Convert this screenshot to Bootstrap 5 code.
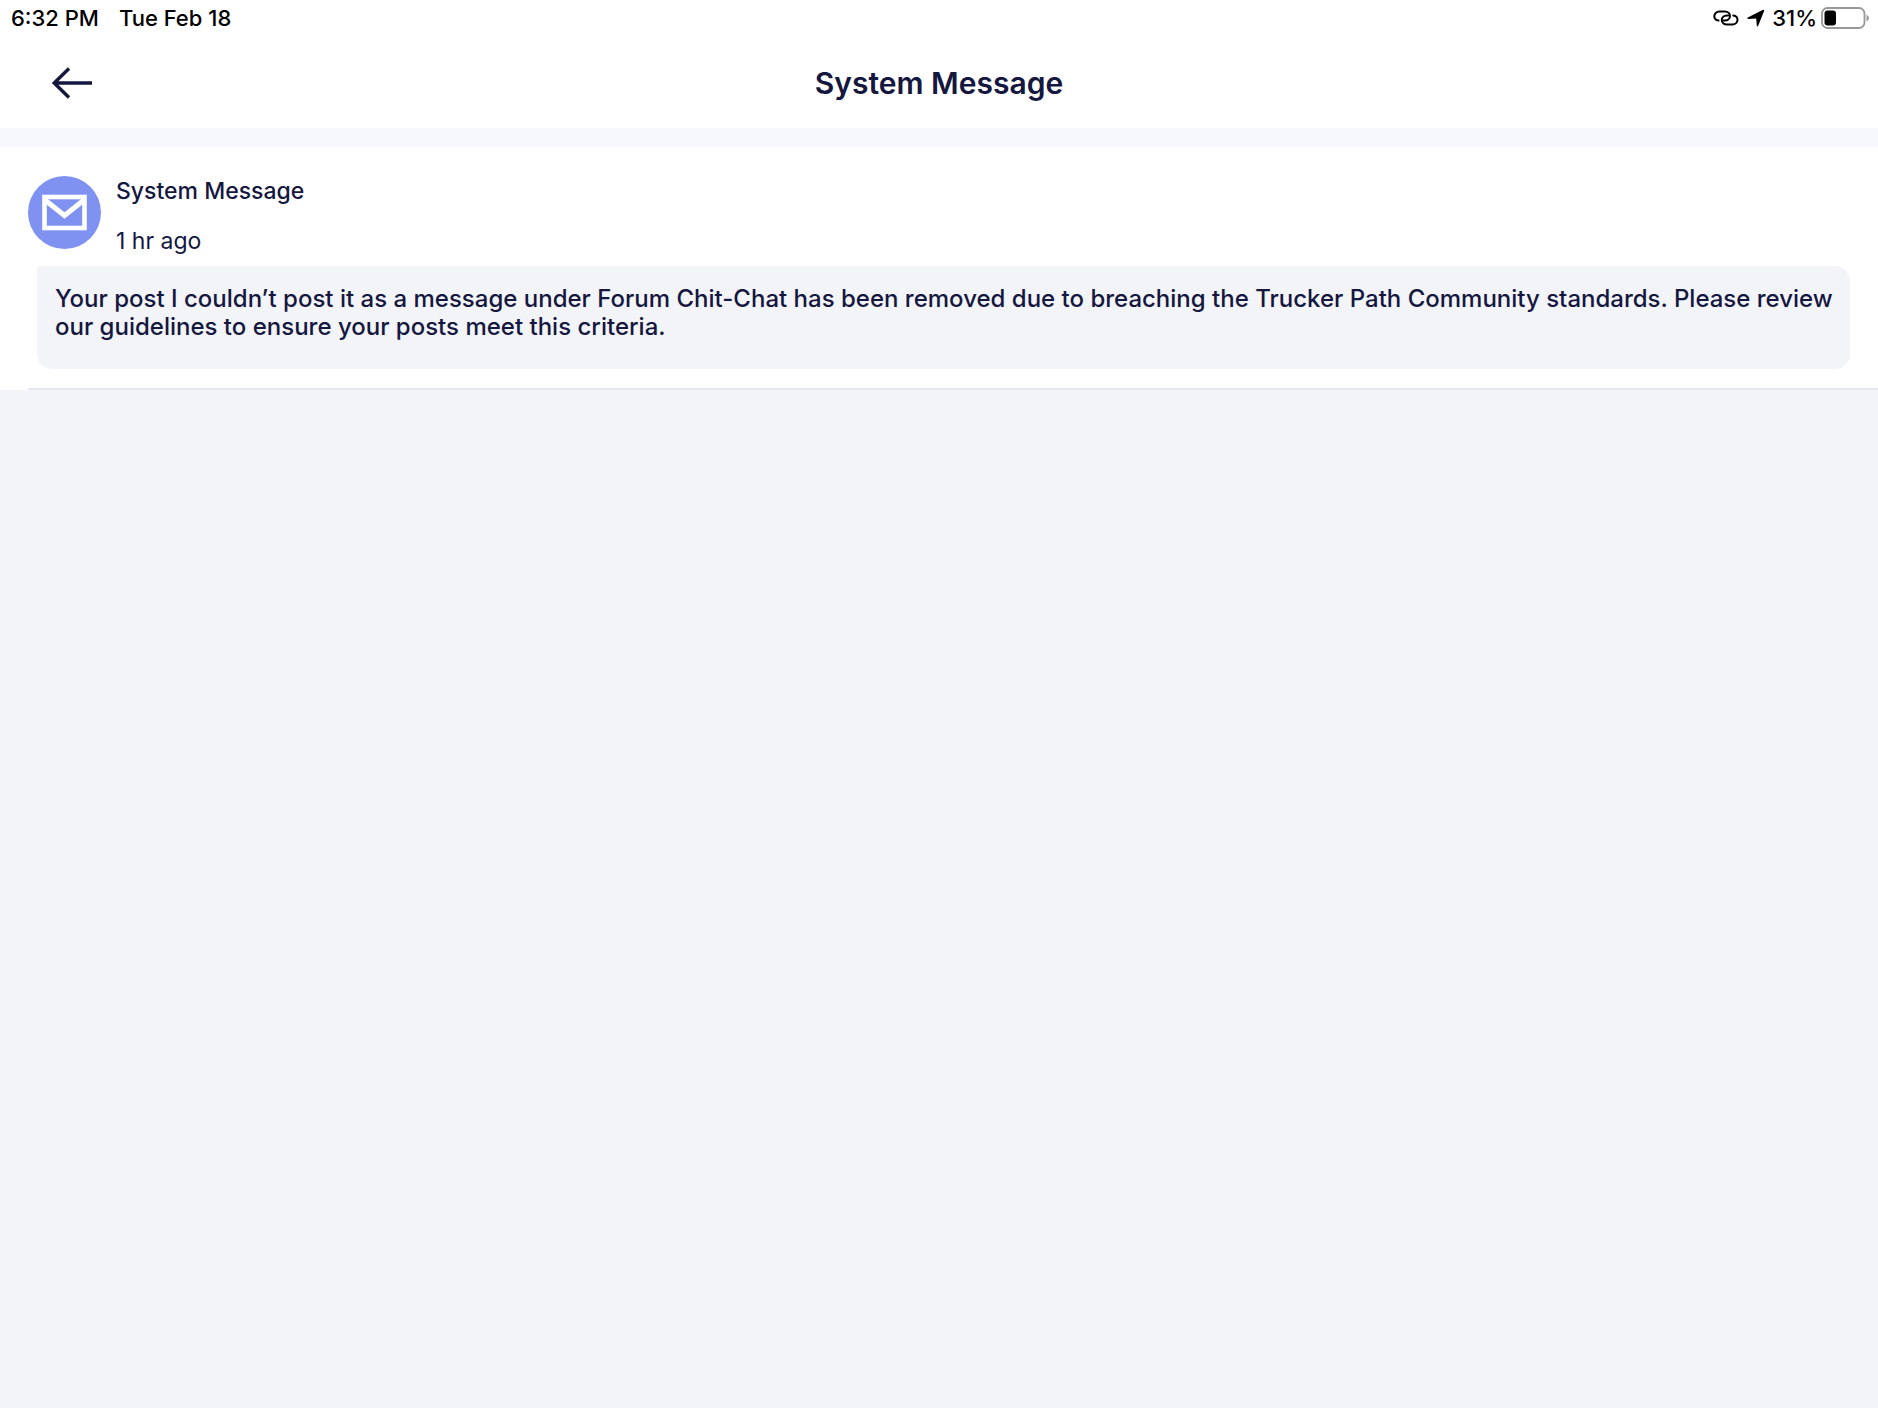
<!DOCTYPE html>
<html lang="en">
<head>
<meta charset="utf-8">
<meta name="viewport" content="width=device-width, initial-scale=1">
<title>System Message</title>
<link href="https://cdn.jsdelivr.net/npm/bootstrap@5.3.0/dist/css/bootstrap.min.css" rel="stylesheet">
<style>
  body { font-family: Inter, "Liberation Sans", sans-serif; background: #f2f4f8; color: #15173f; }
  .status-bar { height: 37px; padding: 0 9px 2px 11px; font-size: 22px; line-height: 34px; color: #000; font-weight: 500; }
  .status-time { gap: 20px; }
  .status-icons { gap: 7px; }
  .title-bar { height: 91px; padding: 0 44px; border: 0; }
  .title-bar .side { width: 56px; height: 56px; }
  .title-bar h1 { font-size: 30px; line-height: 40px; font-weight: 600; }
  .divider-strip { height: 19px; background: #f7f8fb; }
  .message-item { padding: 29px 28px 19px; }
  .message-head { gap: 15px; height: 90px; }
  .sender { font-size: 23px; line-height: 30px; font-weight: 500; }
  .when { font-size: 23px; line-height: 30px; margin-top: 20px; }
  .bubble { margin-left: 9px; padding: 19px 12px 28px 18px; background: #f2f4f8; border-radius: 0 15px 15px 15px; font-size: 24px; line-height: 28px; font-weight: 500; }
  .item-rule { margin-left: 28px; height: 2px; background: #e4e8f0; }
</style>
<script src="https://cdn.jsdelivr.net/npm/bootstrap@5.3.0/dist/js/bootstrap.bundle.min.js"></script>
</head>
<body>
<div class="status-bar bg-white d-flex justify-content-between align-items-center">
  <div class="status-time d-flex"><span>6:32 PM</span><span>Tue Feb 18</span></div>
  <div class="status-icons d-flex align-items-center">
    <svg width="28" height="20" viewBox="0 0 28 20" fill="none" stroke="#000" stroke-width="2" stroke-linecap="round" aria-hidden="true">
      <path d="M6.5 12.6C4 12.2 2.300 10.600 2.300 8.300C2.300 5.600 4.500 3.600 7.400 3.600H12.800C15.800 3.600 18 5.500 18 8C18 10.600 15.800 12.600 12.900 12.600H11.500"/>
      <path d="M21.300 7.400C24 7.800 25.500 9.400 25.500 11.700C25.500 14.400 23.300 16.400 20.400 16.400H14.900C12 16.400 9.800 14.500 9.800 12C9.800 9.400 12 7.400 14.900 7.400H16.300"/>
    </svg>
    <svg width="18" height="18" viewBox="0 0 18 18" aria-hidden="true">
      <path d="M.8 8.500L15.600 1Q17.700 .2 17 2.300L11.300 16.500Q10.300 18.300 9.800 16.500L9.200 9.600L1.500 9.900Q-.4 9.500 .8 8.500Z"/>
    </svg>
    <div class="d-flex align-items-center gap-1">
      <span>31%</span>
      <svg width="48" height="24" viewBox="0 0 48 24" aria-hidden="true">
        <rect x="1" y="2" width="42.500" height="20" rx="5.500" fill="#fff" stroke="#989898" stroke-width="1.800"/>
        <rect x="3.500" y="4.500" width="11.500" height="15" rx="3" fill="#000"/>
        <path d="M45.500 8.500Q48 10 48 12T45.500 15.500Z" fill="#989898"/>
      </svg>
    </div>
  </div>
</div>
<header class="title-bar bg-white d-flex justify-content-between align-items-center">
  <button type="button" class="side btn p-0 border-0 d-flex align-items-center justify-content-center" aria-label="Back">
    <svg width="42" height="34" viewBox="0 0 42 34" fill="none" stroke="#15173f" stroke-width="3.400" aria-hidden="true">
      <path d="M41 17H3M18 2.500L3.200 17L18 31.500"/>
    </svg>
  </button>
  <h1 class="m-0">System Message</h1>
  <div class="side"></div>
</header>
<div class="divider-strip"></div>
<main class="bg-white">
  <article class="message-item">
    <div class="message-head d-flex align-items-start">
      <svg class="flex-shrink-0" width="73" height="74" viewBox="0 0 73 74" aria-hidden="true">
        <circle cx="36.500" cy="36.500" r="36.500" fill="#7f92f2"/>
        <rect x="16.500" y="21" width="40" height="31" fill="none" stroke="#fff" stroke-width="4.600"/>
        <path d="M17 24L36.500 39.500L56 24" fill="none" stroke="#fff" stroke-width="5"/>
      </svg>
      <div>
        <div class="sender">System Message</div>
        <div class="when">1 hr ago</div>
      </div>
    </div>
    <div class="bubble">Your post I couldn’t post it as a message under Forum Chit-Chat has been removed due to breaching the Trucker Path Community standards. Please review our guidelines to ensure your posts meet this criteria.</div>
  </article>
  <div class="item-rule"></div>
</main>
</body>
</html>
